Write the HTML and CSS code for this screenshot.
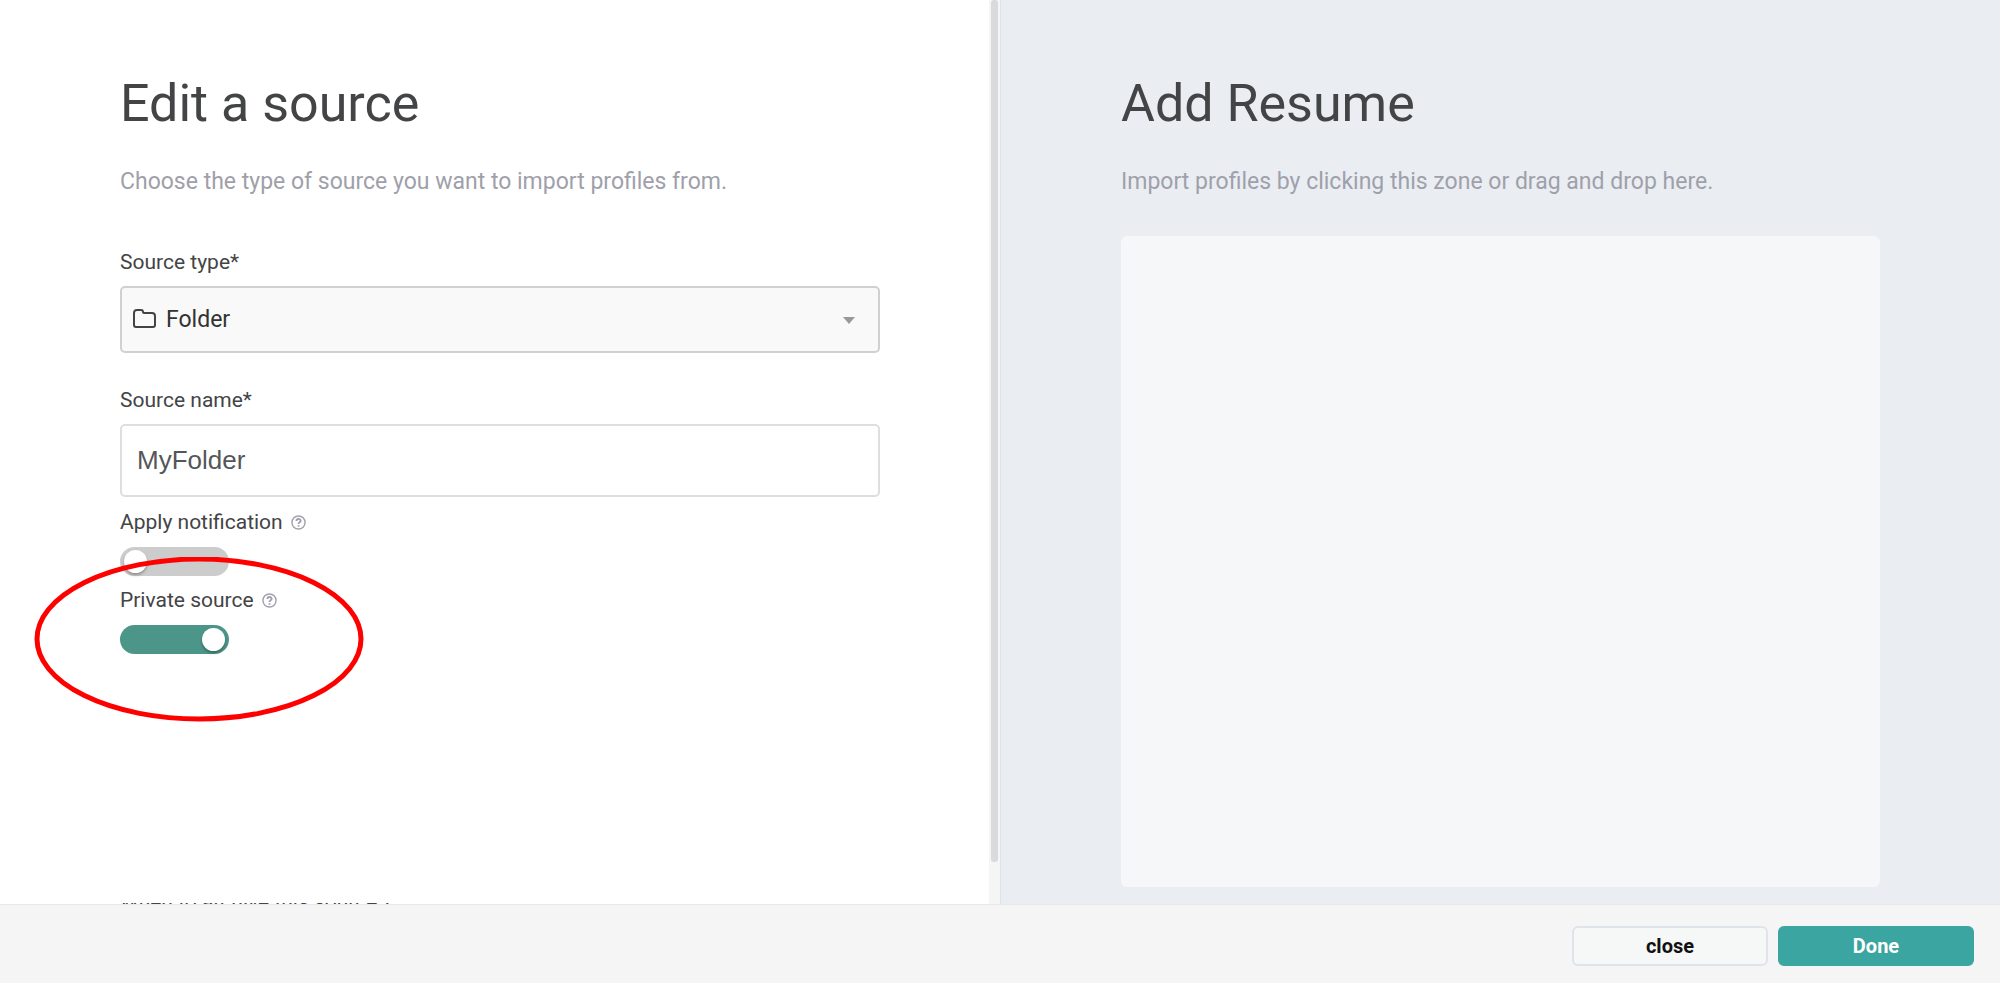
FILE: index.html
```
<!DOCTYPE html>
<html lang="en">
<head>
	<meta charset="utf-8">
	<title>Edit a source</title>
	<link rel="stylesheet" href="styles.css">
</head>
<body>
	<div class="columns">
		<main class="panel source">
			<h1>Edit a source</h1>
			<p class="intro">Choose the type of source you want to import profiles from.</p>
			<form id="sourceform">
				<label class="title" for="type">Source type*</label>
				<div class="selectbox">
					<svg class="folder" viewBox="0 0 24 20"><path d="M1 16V4Q1 1 4 1H8Q10 1 10 3Q10 4 12 4H19Q22 4 22 7V16Q22 18 20 18H3Q1 18 1 16Z"/></svg>
					<select id="type">
						<option>Folder</option>
					</select>
					<svg class="arrow" viewBox="0 0 12 7"><path d="M0 0H12L6 7Z"/></svg>
				</div>
				<label class="title" for="name">Source name*</label>
				<input id="name" class="textbox" type="text" value="MyFolder">
				<div class="option">
					<label for="notify">Apply notification</label>
					<svg class="help" viewBox="0 0 16 16"><circle cx="8" cy="8" r="7"/><path class="mark" d="M5.800 6.500C5.800 3.500 10.300 3.700 10.300 6.200C10.300 7.800 8 7.700 8 9.500M8 10.800V12.500"/></svg>
				</div>
				<input id="notify" class="switch" type="checkbox">
				<div class="option">
					<label for="private">Private source</label>
					<svg class="help" viewBox="0 0 16 16"><circle cx="8" cy="8" r="7"/><path class="mark" d="M5.800 6.500C5.800 3.500 10.300 3.700 10.300 6.200C10.300 7.800 8 7.700 8 9.500M8 10.800V12.500"/></svg>
				</div>
				<input id="private" class="switch" type="checkbox" checked>
				<p class="more">When to archive this source ?</p>
			</form>
			<svg class="marker" viewBox="0 0 330 165"><ellipse cx="165" cy="82" rx="162" ry="80"/></svg>
			<div class="scrollbar"><div class="thumb"></div></div>
		</main>
		<section class="panel resume">
			<h1>Add Resume</h1>
			<p class="intro">Import profiles by clicking this zone or drag and drop here.</p>
			<button class="dropzone" type="button" aria-label="Import profiles"></button>
		</section>
	</div>
	<footer>
		<button class="action" type="button">close</button>
		<button class="action done" type="submit" form="sourceform">Done</button>
	</footer>
</body>
</html>
```

FILE: styles.css
```
* {
	box-sizing: border-box;
}

body {
	margin: 0;
	height: 100vh;
	display: flex;
	flex-direction: column;
	font-family: Roboto, sans-serif;
	color: #434445;
	background: #fff;
}

.columns {
	flex: 1;
	min-height: 0;
	display: grid;
	grid-template-columns: 1fr 1fr;
}

.panel {
	position: relative;
	min-width: 0;
	overflow: hidden;
	padding: 73px 12% 17px;
}

.resume {
	display: flex;
	flex-direction: column;
	background: #eaeef3;
	border-left: 1px solid #dae3eb;
}

h1 {
	margin: 0 0 32px;
	font-size: 52px;
	line-height: 62px;
	font-weight: 400;
}

.intro {
	margin: 0 0 39px;
	font-size: 23px;
	line-height: 30px;
	color: #9fa0aa;
}

form {
	padding-top: 14px;
}

.title {
	display: block;
	margin-bottom: 12px;
	font-size: 21px;
	line-height: 24px;
}

.selectbox {
	position: relative;
	margin-bottom: 35px;
}

select {
	display: block;
	width: 100%;
	height: 67px;
	padding: 0 44px;
	appearance: none;
	border: 2px solid #d0d0d0;
	border-radius: 5px;
	background: #f9f9f9;
	color: #333;
	font: 23px Roboto, sans-serif;
}

.folder {
	position: absolute;
	left: 13px;
	top: 23px;
	width: 24px;
	height: 20px;
	fill: none;
	stroke: #444;
	stroke-width: 2;
}

.arrow {
	position: absolute;
	right: 25px;
	top: 31px;
	width: 12px;
	height: 7px;
	fill: #999;
}

.textbox {
	display: block;
	width: 100%;
	height: 73px;
	margin-bottom: 13px;
	padding: 0 15px;
	border: 2px solid #dedede;
	border-radius: 5px;
	color: #555659;
	font: 26px "Liberation Sans", Arial, sans-serif;
}

.option {
	display: flex;
	align-items: center;
	gap: 8px;
	margin: 12px 0;
	font-size: 21px;
	line-height: 25px;
}

.help {
	width: 15px;
	height: 15px;
	fill: none;
	stroke: #a0a1ad;
	stroke-width: 1.5;
}

.help .mark {
	stroke-width: 2;
}

.switch {
	display: block;
	appearance: none;
	width: 109px;
	height: 29px;
	margin: 0;
	padding: 3px 4px;
	border-radius: 15px;
	background: #ccc;
}

.switch::before {
	content: "";
	display: block;
	width: 23px;
	height: 23px;
	border-radius: 50%;
	background: #fff;
	box-shadow: 0 2px 3px rgba(0, 0, 0, .3);
}

.switch:checked {
	background: #4b9688;
}

.switch:checked::before {
	margin-left: auto;
}

.more {
	position: relative;
	margin: 236px 0 0;
	font-size: 21px;
	line-height: 24px;
}

/* white strip over the upper half of the next field's label */
.more::before {
	content: "";
	position: absolute;
	top: 0;
	left: 0;
	right: 0;
	height: 13px;
	background: #fff;
}

.marker {
	position: absolute;
	left: 34px;
	top: 557px;
	width: 330px;
	height: 165px;
	fill: none;
	stroke: #f00;
	stroke-width: 5;
}

.scrollbar {
	position: absolute;
	top: 0;
	right: 0;
	bottom: 0;
	width: 11px;
	padding: 0 2px;
	background: #f5f5f5;
}

.thumb {
	height: 862px;
	border-radius: 3px;
	background: #dad9de;
}

.dropzone {
	flex: 1;
	width: 100%;
	border: 0;
	border-radius: 6px;
	background: #f6f7f9;
}

footer {
	display: flex;
	justify-content: flex-end;
	gap: 10px;
	padding: 21px 26px 17px;
	background: #f5f5f5;
	border-top: 1px solid #e8e8e8;
}

.action {
	width: 196px;
	height: 40px;
	border: 2px solid #dfe4ec;
	border-radius: 6px;
	background: #f6f7f7;
	color: #111;
	font: bold 20px Roboto, sans-serif;
}

.action.done {
	border-color: #3ba5a1;
	background: #3ba5a1;
	color: #fff;
}
```
